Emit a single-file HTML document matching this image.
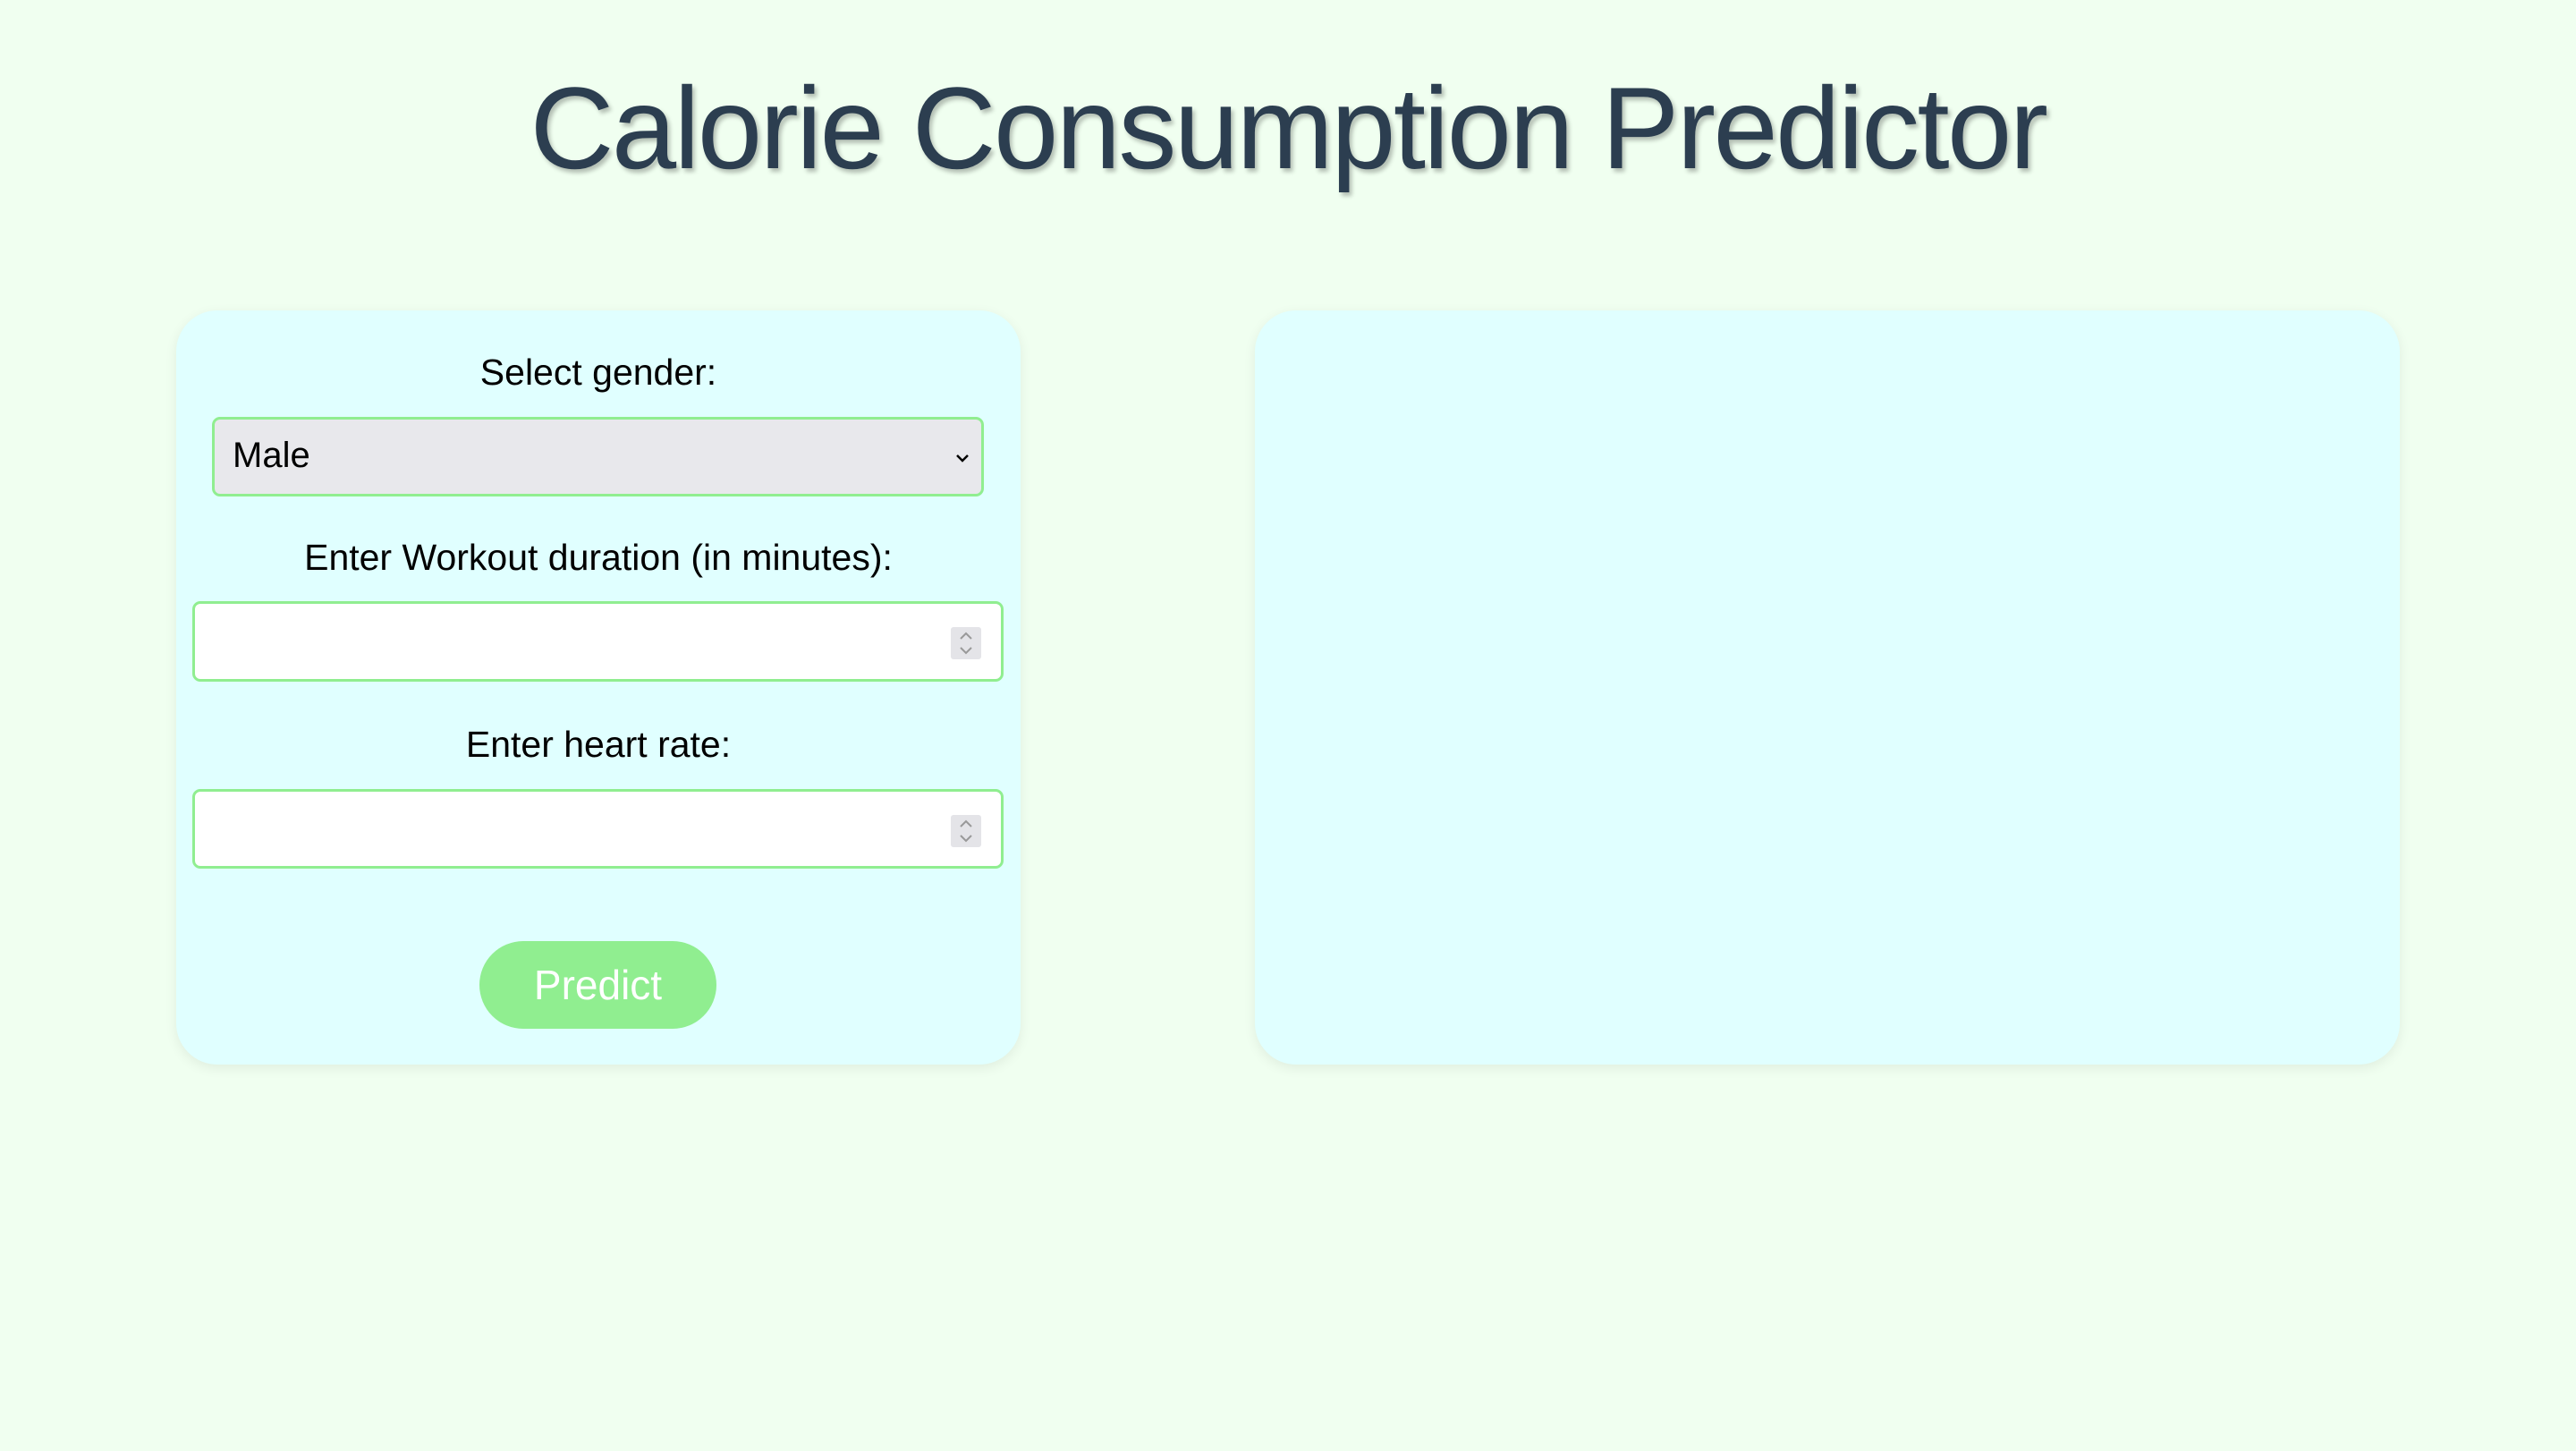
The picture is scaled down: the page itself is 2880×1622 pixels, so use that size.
<!DOCTYPE html>
<html><head><style>
html,body{margin:0;padding:0}
body{width:2880px;height:1622px;background:#f0fff0;position:relative;overflow:hidden;font-family:"Liberation Sans",sans-serif}
h1{position:absolute;left:0;top:68px;width:2880px;margin:0;text-align:center;font-size:130px;font-weight:normal;color:#2c3e50;letter-spacing:-2.6px;text-shadow:3px 4px 5px rgba(0,0,0,.25);line-height:150px}
.card{position:absolute;top:347px;height:843px;background:#e0ffff;border-radius:46px;box-shadow:0 4px 14px rgba(0,0,0,.07)}
.lbl{position:absolute;left:197px;width:944px;text-align:center;font-size:41px;color:#000;line-height:44px}
.box{position:absolute;box-sizing:border-box;border:3px solid #90ee90;border-radius:9px}
.spin{position:absolute;right:22px;top:26px;width:34px;height:36px;background:#e4e4e8;border-radius:3px}
.spin svg{display:block}
</style></head><body>
<h1>Calorie Consumption Predictor</h1>
<div class="card" style="left:197px;width:944px"></div>
<div class="card" style="left:1403px;width:1280px"></div>
<div class="lbl" style="top:394px">Select gender:</div>
<div class="box" style="left:237px;top:466px;width:863px;height:89px;background:#e8e8ec">
<span style="position:absolute;left:20px;top:18px;font-size:40px">Male</span>
<svg style="position:absolute;right:12px;top:36px" width="18" height="14" viewBox="0 0 18 14"><path d="M3 4 L9 10 L15 4" stroke="#000" stroke-width="2.5" fill="none"/></svg>
</div>
<div class="lbl" style="top:601px">Enter Workout duration (in minutes):</div>
<div class="box" style="left:215px;top:672px;width:907px;height:90px;background:#fff">
<div class="spin"><svg width="34" height="36"><path d="M11 13 L17 7 L23 13 M11 23 L17 29 L23 23" stroke="#999" stroke-width="2" fill="none"/></svg></div></div>
<div class="lbl" style="top:810px">Enter heart rate:</div>
<div class="box" style="left:215px;top:882px;width:907px;height:89px;background:#fff">
<div class="spin"><svg width="34" height="36"><path d="M11 13 L17 7 L23 13 M11 23 L17 29 L23 23" stroke="#999" stroke-width="2" fill="none"/></svg></div></div>
<div style="position:absolute;left:536px;top:1052px;width:265px;height:98px;background:#90ee90;border-radius:49px;color:#fff;font-size:46px;line-height:98px;text-align:center">Predict</div>
</body></html>
